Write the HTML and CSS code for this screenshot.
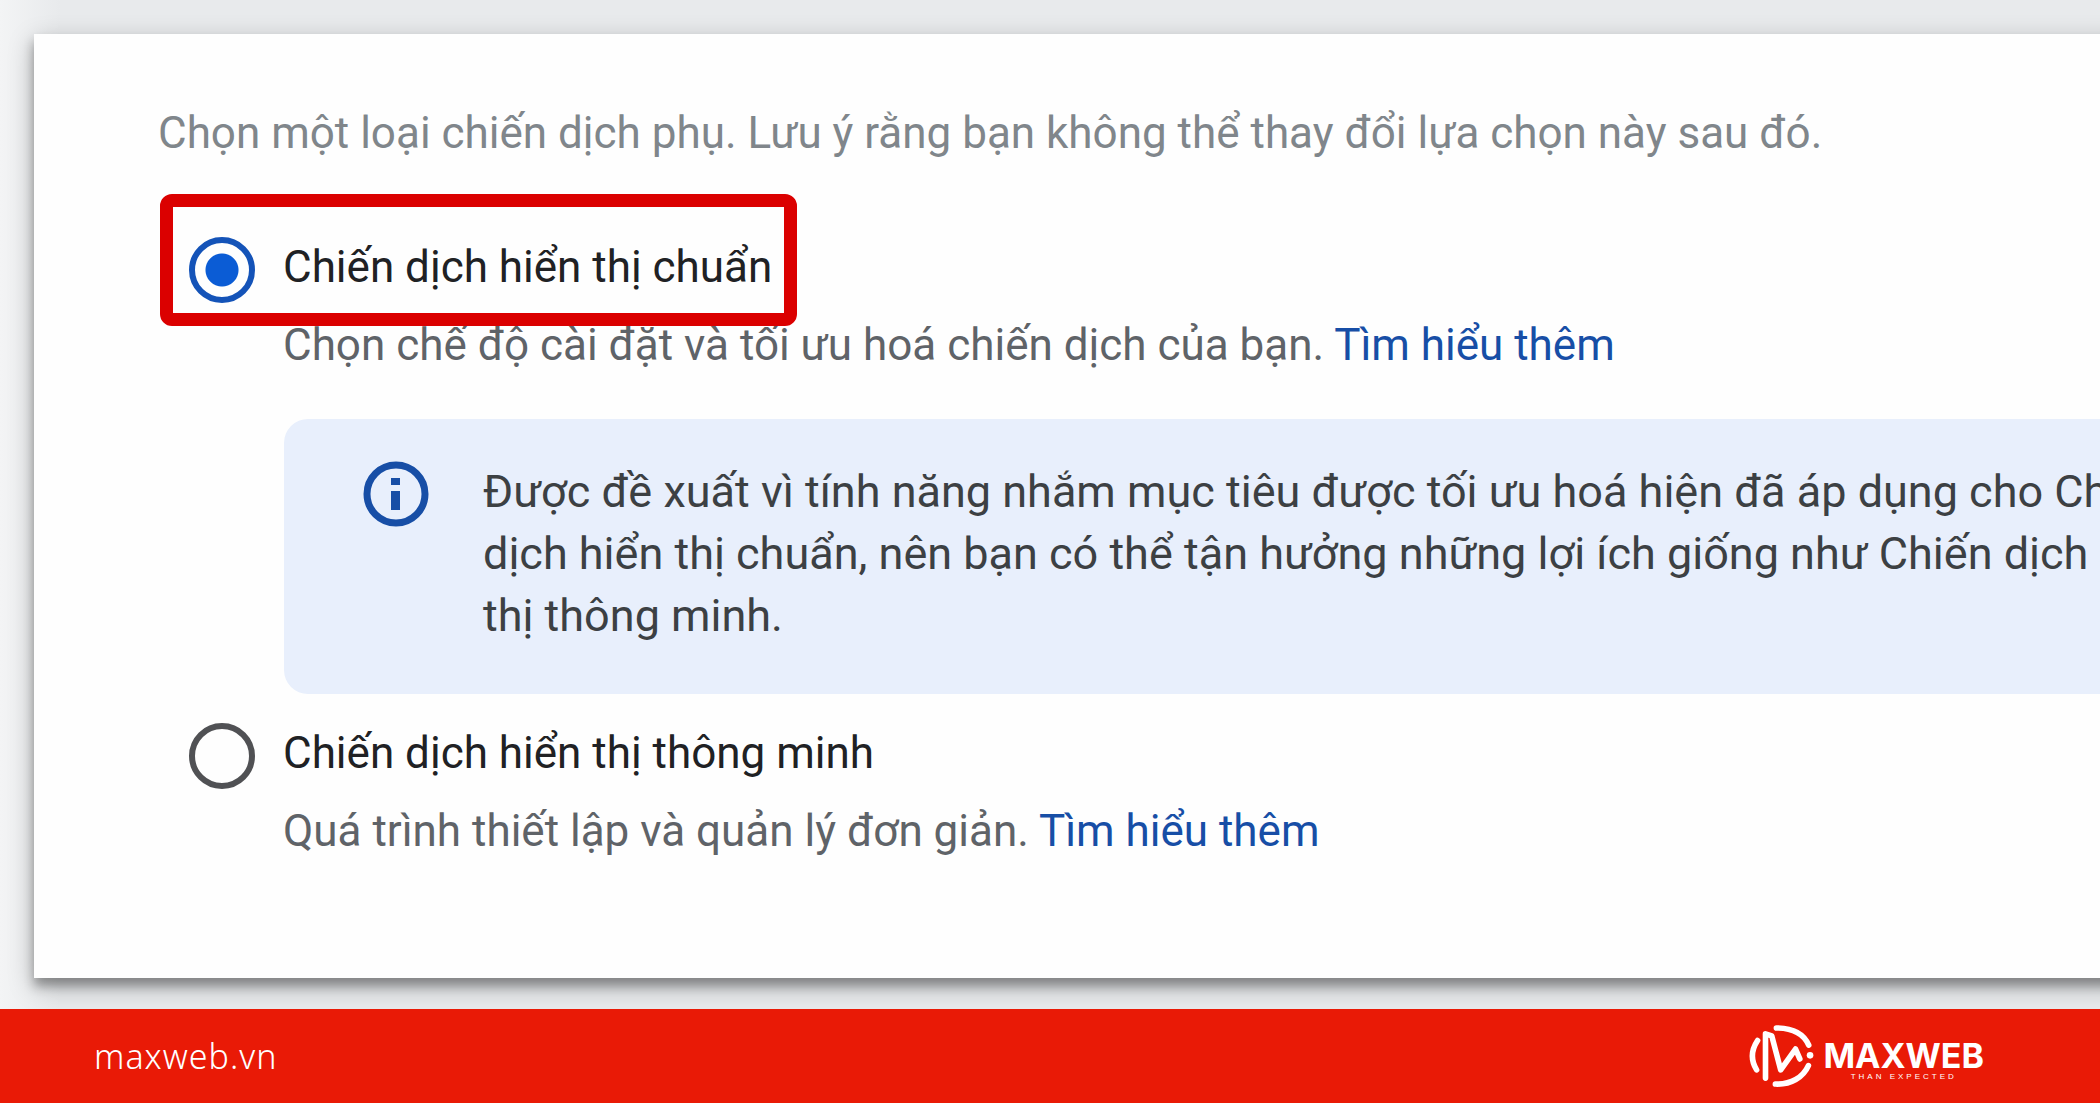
FILE: index.html
```html
<!DOCTYPE html>
<html lang="vi">
<head>
  <meta charset="UTF-8">
  <meta name="viewport" content="width=device-width, initial-scale=1.0">
  <title>Chọn loại chiến dịch phụ</title>
  <link rel="stylesheet" href="styles.css">
</head>
<body>
  <main class="stage">
    <form class="card">
      <p class="intro">Chọn một loại chiến dịch phụ. Lưu ý rằng bạn không thể thay đổi lựa chọn này sau đó.</p>

      <div class="option">
        <label class="option-label highlight" for="standard">
          <input type="radio" id="standard" name="subtype" checked>
          <span>Chiến dịch hiển thị chuẩn</span>
        </label>
        <p class="desc">Chọn chế độ cài đặt và tối ưu hoá chiến dịch của bạn. <a href="#">Tìm hiểu thêm</a></p>
      </div>

      <div class="note">
        <svg class="note-icon" viewBox="0 0 66 66" aria-hidden="true">
          <circle cx="33" cy="33" r="29" fill="none" stroke="#174ea6" stroke-width="7"/>
          <rect x="28" y="17" width="9" height="7"/>
          <rect x="28" y="30" width="9" height="19"/>
        </svg>
        <p>Được đề xuất vì tính năng nhắm mục tiêu được tối ưu hoá hiện đã áp dụng cho Chiến<br>dịch hiển thị chuẩn, nên bạn có thể tận hưởng những lợi ích giống như Chiến dịch hiển<br>thị thông minh.</p>
      </div>

      <div class="option">
        <label class="option-label" for="smart">
          <input type="radio" id="smart" name="subtype">
          <span>Chiến dịch hiển thị thông minh</span>
        </label>
        <p class="desc">Quá trình thiết lập và quản lý đơn giản. <a href="#">Tìm hiểu thêm</a></p>
      </div>
    </form>
  </main>

  <footer class="footer">
    <span class="site">maxweb.vn</span>
    <div class="brand">
      <svg class="brand-mark" viewBox="90 65 200 200" aria-hidden="true">
        <path d="M173 80C221 80 256 98 271 132"/>
        <path d="M170 250C217 252 254 230 270 194"/>
        <path d="M116 118Q86 163 113 207"/>
        <path d="M140 232V98L159 104L186 207L231 144L244 174"/>
        <circle cx="275" cy="163" r="10"/>
      </svg>
      <div class="brand-text">
        <span class="brand-name">MAXWEB</span>
        <span class="brand-tag">THAN EXPECTED</span>
      </div>
    </div>
  </footer>
</body>
</html>
```

FILE: styles.css
```css
:root {
  --blue: #174ea6;
  --red: #e91a06;
  --mark: #db0000;
  --text: #3c4043;
}
* {
  box-sizing: border-box;
}
body {
  margin: 0;
  min-height: 100vh;
  display: flex;
  flex-direction: column;
  overflow-x: hidden;
  font-family: Roboto, "Liberation Sans", sans-serif;
  font-size: 44px;
  line-height: 62px;
  color: var(--text);
  background: #e8eaed;
}
p {
  margin: 0;
}
a {
  color: var(--blue);
  text-decoration: none;
}
.stage {
  flex: 1;
  padding: 34px 0 31px 34px;
  overflow: hidden;
  background: linear-gradient(to right, #f3f4f5, #e8eaec 60px);
}
/* the card runs off the right edge */
.card {
  height: 100%;
  margin-right: -40px;
  padding: 68px 0 116px 124px;
  background: #fefefe;
  box-shadow: 0 8px 10px rgba(0, 0, 0, 0.3), 0 8px 24px rgba(0, 0, 0, 0.25);
}
.intro {
  margin-bottom: 72px;
  color: #80868b;
}

/* options */
.option {
  padding-left: 31px;
}
.option-label {
  position: relative;
  display: flex;
  align-items: center;
  gap: 28px;
  width: fit-content;
  height: 62px;
  color: #202124;
  cursor: pointer;
}
.option-label input {
  appearance: none;
  flex: none;
  width: 66px;
  height: 66px;
  margin: 6px 0 0;
  border: 6px solid #505154;
  border-radius: 50%;
}
.option-label input:checked {
  border-color: #1453b8;
  background: radial-gradient(circle, #0b5cd5 16px, transparent 17px);
}
.highlight::after {
  content: "";
  position: absolute;
  inset: -42px -25px -28px -29px;
  border: 13px solid var(--mark);
  border-radius: 12px;
  pointer-events: none;
}
.option .desc {
  margin-top: 16px;
  padding-left: 94px;
  color: #5f6368;
}

/* recommendation */
.note {
  display: flex;
  gap: 54px;
  margin: 43px 0 28px 126px;
  padding: 42px 0 47px 79px;
  overflow: hidden;
  font-size: 45px;
  white-space: nowrap;
  background: #e8effc;
  border-radius: 24px 0 0 24px;
}
.note-icon {
  flex: none;
  width: 66px;
  height: 66px;
  fill: var(--blue);
}

/* footer */
.footer {
  display: flex;
  align-items: center;
  justify-content: space-between;
  height: 94px;
  padding: 0 116px 0 94px;
  color: #fff;
  background: var(--red);
}
.site {
  font-family: "Noto Sans", sans-serif;
  font-size: 34px;
  font-weight: 300;
  letter-spacing: 1px;
}
.brand {
  display: flex;
  align-items: center;
  gap: 8px;
}
.brand-mark {
  width: 66px;
  height: 66px;
  fill: none;
  stroke: #fff;
  stroke-width: 17;
  stroke-linecap: round;
  stroke-linejoin: round;
}
.brand-mark circle {
  fill: #fff;
  stroke: none;
}
.brand-text {
  display: flex;
  flex-direction: column;
  align-items: center;
  padding-top: 8px;
}
.brand-name {
  font-family: Inter, sans-serif;
  font-size: 34px;
  font-weight: 700;
  line-height: 34px;
}
.brand-tag {
  font-family: "Liberation Sans", sans-serif;
  font-size: 8px;
  line-height: 8px;
  letter-spacing: 3px;
}
```
